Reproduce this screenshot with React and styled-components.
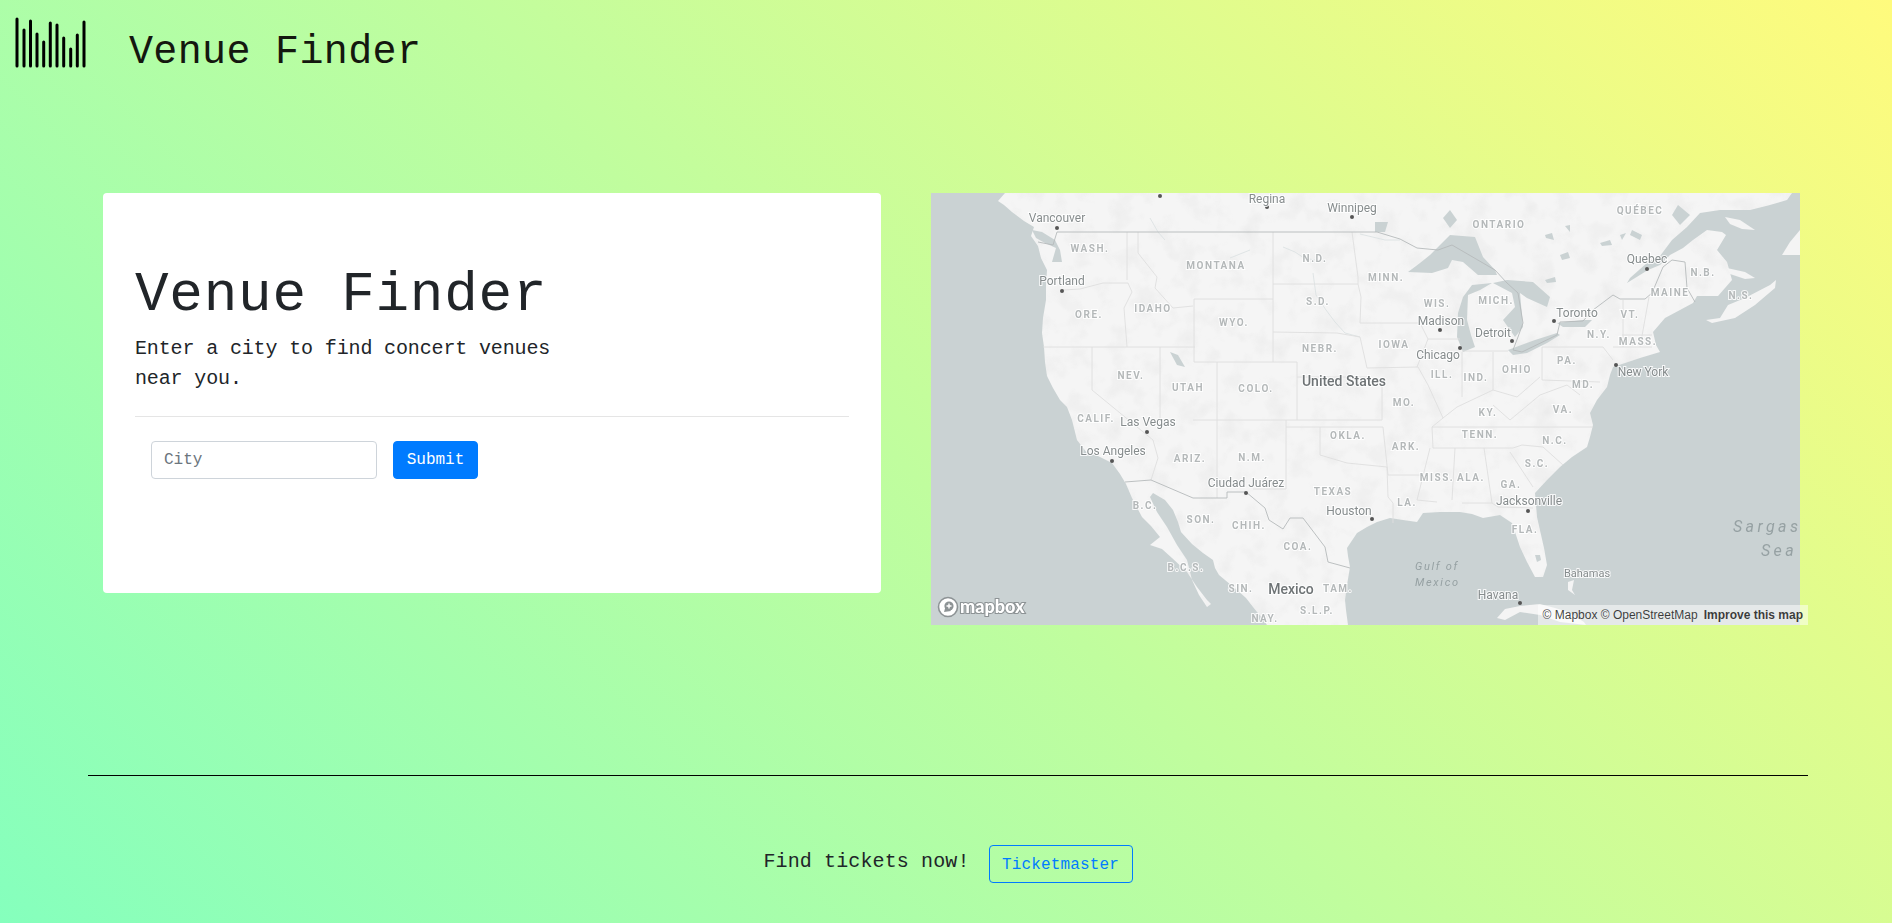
import React from 'react';
import styled, { createGlobalStyle } from 'styled-components';

const GlobalStyle = createGlobalStyle`
  html, body {
    margin: 0;
    padding: 0;
  }
  body {
    font-family: "Liberation Mono", "DejaVu Sans Mono", monospace;
    color: #212529;
  }
`;

const Page = styled.div`
  box-sizing: border-box;
  min-height: 100vh;
  overflow: hidden;
  background-color: #85ffbd;
  background-image: linear-gradient(45deg, #85ffbd 0%, #fffb7d 100%);
`;

const Header = styled.header`
  display: flex;
  align-items: flex-start;
  gap: 42px;
  height: 82px;
  padding: 16px 0 0 15px;
  box-sizing: border-box;
`;

const Brand = styled.h2`
  margin: 13px 0 0;
  font-size: 40px;
  line-height: 48px;
  font-weight: 400;
  letter-spacing: 0.35px;
  color: #14170f;
`;

const Main = styled.main`
  display: flex;
  align-items: flex-start;
  gap: 50px;
  margin: 111px 84px 0 103px;
`;

const Card = styled.section`
  box-sizing: border-box;
  width: 778px;
  height: 400px;
  padding: 64px 32px;
  background: #fff;
  border-radius: 4px;
`;

const Title = styled.h1`
  margin: 0 0 5px;
  padding-top: 5px;
  font-size: 56px;
  line-height: 67px;
  font-weight: 400;
  letter-spacing: 0.75px;
  color: #212529;
`;

const Lead = styled.p`
  margin: 0;
  max-width: 440px;
  font-size: 20px;
  line-height: 30px;
  letter-spacing: -0.14px;
  color: #212529;
`;

const Divider = styled.hr`
  margin: 22px 0 24px;
  border: 0;
  border-top: 1px solid rgba(0, 0, 0, 0.1);
`;

const SearchForm = styled.form`
  display: flex;
  gap: 16px;
  padding-left: 16px;
`;

const CityInput = styled.input`
  box-sizing: border-box;
  width: 226px;
  height: 38px;
  padding: 6px 12px;
  border: 1px solid #ced4da;
  border-radius: 4px;
  font-family: inherit;
  font-size: 16px;
  color: #495057;
  &::placeholder {
    color: #6c757d;
    opacity: 1;
  }
`;

const SubmitButton = styled.button`
  box-sizing: border-box;
  width: 85px;
  height: 38px;
  padding: 0;
  border: 1px solid #007bff;
  border-radius: 4px;
  background: #007bff;
  color: #fff;
  font-family: inherit;
  font-size: 16px;
`;

const MapWrap = styled.div`
  position: relative;
  width: 877px;
  height: 432px;
`;

const MapSvg = styled.svg`
  display: block;
  width: 869px;
  height: 432px;
  filter: blur(0.35px);
`;

const Attribution = styled.div`
  position: absolute;
  right: 0;
  bottom: 0;
  display: flex;
  gap: 6px;
  padding: 0 5px;
  background: rgba(255, 255, 255, 0.5);
  font: 12px/20px "Liberation Sans", Arial, sans-serif;
  color: rgba(0, 0, 0, 0.75);
`;

const AttributionLink = styled.span`
  font-weight: ${(p) => (p.$strong ? 700 : 400)};
`;

const PlaceLabel = styled.text`
  font-family: Roboto, "Liberation Sans", sans-serif;
  text-anchor: middle;
  dominant-baseline: middle;
  paint-order: stroke;
  stroke: rgba(255, 255, 255, 0.85);
  stroke-width: 2px;
  font-size: ${(p) => p.$size}px;
  font-weight: ${(p) => p.$weight};
  letter-spacing: ${(p) => p.$spacing}px;
  fill: ${(p) => p.$color};
`;

const SeaLabel = styled.text`
  font-family: Roboto, "Liberation Sans", sans-serif;
  font-style: italic;
  dominant-baseline: middle;
  font-size: ${(p) => p.$size}px;
  letter-spacing: ${(p) => p.$spacing}px;
  fill: #96a1a3;
`;

const LogoWord = styled.text`
  font-family: Lato, "Open Sans", sans-serif;
  font-weight: 900;
  font-size: 18px;
  fill: #fff;
  stroke: #8d9395;
  stroke-width: 2.2px;
  paint-order: stroke;
`;

const Footer = styled.footer`
  margin: 150px 84px 0 88px;
  border-top: 1px solid #000;
  padding-top: 69px;
  display: flex;
  justify-content: center;
  align-items: center;
  gap: 19px;
`;

const FooterText = styled.span`
  font-size: 20px;
  line-height: 30px;
  letter-spacing: 0.12px;
  padding-bottom: 4px;
  color: #212529;
`;

const TicketButton = styled.a`
  box-sizing: border-box;
  width: 144px;
  height: 38px;
  padding-top: 2px;
  display: flex;
  align-items: center;
  justify-content: center;
  border: 1px solid #007bff;
  border-radius: 4px;
  font-size: 16px;
  letter-spacing: 0.15px;
  color: #007bff;
`;

const BARS = [
  [17, 19], [24, 30], [30.5, 21], [37, 34], [43.7, 42], [50.3, 23],
  [57, 25], [63.7, 38], [70.7, 49], [77.3, 35], [84, 22],
];

const BarsLogo = () => (
  <svg width="72" height="52" viewBox="15 16 72 52" aria-hidden="true">
    {BARS.map(([x, top]) => (
      <line key={x} x1={x} x2={x} y1={top} y2={66} stroke="#000" strokeWidth="3" strokeLinecap="round" />
    ))}
  </svg>
);

const LAND = `M1005,193 L998,201 1004,205 1012,212 1024,221 1034,227 1031,236 1038,246 1041,258
  1047,270 1046,285 1046,300 1043,318 1042,333 1044,347 1045,362 1047,376 1053,388 1060,400 1067,407
  1072,420 1077,440 1087,453 1098,456 1112,463 1120,474 1126,484 1132,498 1142,517 1151,526 1160,537
  1150,545 1162,549 1172,558 1187,572 1197,587 1207,600 1211,604 1207,607 1199,595 1192,580 1187,560
  1177,545 1167,527 1157,512 1150,497 1153,493 1165,500 1173,510 1178,522 1181,532 1192,544 1203,553
  1213,560 1215,568 1219,575 1237,590 1246,598 1253,607 1262,618 1267,625 1348,625 1346,610 1345,600
  1347,585 1350,567 1348,556 1347,548 1357,533 1367,527 1377,522 1390,518 1403,520 1417,522 1423,513
  1440,512 1460,512 1472,514 1483,518 1500,515 1512,523 1516,535 1520,547 1527,562 1535,577 1543,577
  1547,565 1544,548 1537,517 1535,493 1547,480 1560,467 1572,457 1587,447 1590,437 1593,425 1590,413
  1597,400 1607,387 1610,375 1613,367 1640,358 1660,352 1656,345 1653,332 1665,318 1680,310 1693,303
  1697,296 1718,296 1732,280 1727,262 1717,250 1726,235 1722,232 1707,230 1693,240 1683,248 1670,255
  1660,265 1648,270 1627,283 1630,278 1648,262 1660,256 1672,240 1687,227 1700,213 1720,210 1750,210
  1770,205 1787,200 1792,193 Z`;

const NOVA_SCOTIA = '1706,320 1720,318 1728,305 1745,298 1770,285 1776,280 1775,288 1755,305 1735,318 1712,323';
const PEI = '1727,268 1745,272 1755,278 1745,279 1730,274';
const ANTICOSTI = '1725,217 1740,220 1755,230 1742,229 1730,224';
const CAPE = '1782,255 1790,242 1800,230 1800,255';
const CUBA = '1497,618 1505,609 1520,606 1540,604 1555,608 1568,612 1584,622 1586,625 1560,622 1540,615 1520,612 1505,620';
const ANDROS = '1568,582 1574,580 1572,590 1575,595 1568,590';
const FLORIDA_LAKE = '1535,555 1540,555 1541,560 1537,562';

const LAKES = [
  '1408,272 1420,263 1430,255 1440,245 1450,235 1475,237 1483,257 1495,270 1497,275 1478,275 1463,262 1452,260 1448,268 1432,273',
  '1472,285 1492,283 1480,290 1468,295 1467,320 1471,335 1475,347 1463,352 1457,337 1458,313 1463,297',
  '1493,283 1507,280 1533,282 1550,297 1547,307 1527,298 1520,293 1523,327 1515,337 1503,320 1515,307 1512,293',
  '1508,350 1535,340 1557,333 1560,335 1547,343 1527,353 1513,355',
  '1557,323 1583,320 1592,320 1585,327 1563,327',
  '1375,222 1388,222 1385,232 1375,232',
  '1443,218 1450,210 1457,220 1450,228',
  '1170,352 1178,355 1185,367 1177,365',
  '1600,243 1610,240 1612,245 1602,246',
  '1560,255 1568,252 1570,258 1562,260',
  '1545,280 1555,277 1556,282 1547,283',
  '1545,235 1552,233 1554,240 1546,238',
  '1632,230 1642,235 1640,240 1630,235',
  '1620,235 1626,233 1622,240',
  '1565,226 1570,225 1570,232',
  '1678,205 1690,215 1680,225 1672,215',
  '1032,230 1042,232 1055,240 1060,250 1062,262 1052,262 1056,248 1045,243 1036,238',
];

const STATE_LINES = [
  '1063,290 1080,289 1103,283 1128,283',
  '1127,232 1127,280',
  '1128,283 1132,292 1124,308 1127,347',
  '1043,347 1195,347',
  '1138,232 1138,253 1157,277 1155,288 1173,308 1193,306',
  '1194,299 1273,299 1273,362 1194,362 1194,299',
  '1273,232 1273,299',
  '1273,284 1358,284',
  '1352,232 1358,277 1358,284 1361,297 1360,323 1420,323',
  '1273,332 1337,333 1360,337 1367,368 1418,367',
  '1273,362 1297,362 1297,420',
  '1297,377 1370,377 1382,387 1382,420',
  '1193,420 1382,420',
  '1286,427 1383,427 1388,475 1420,475',
  '1286,420 1286,489 1253,489',
  '1320,427 1320,455 1347,463 1387,467 1388,497 1393,503 1393,523',
  '1160,347 1160,420',
  '1092,347 1092,390 1153,440 1158,458 1151,480',
  '1217,362 1217,498',
  '1420,323 1428,339 1417,367',
  '1428,339 1460,339',
  '1462,352 1462,397',
  '1462,351 1508,351',
  '1493,352 1493,390',
  '1542,347 1542,380',
  '1542,347 1603,347 1613,360',
  '1542,380 1600,382',
  '1418,367 1428,385 1443,418 1457,407 1493,390 1517,397 1540,377',
  '1432,427 1593,427',
  '1433,448 1513,448 1522,445 1543,447 1563,465',
  '1510,452 1533,487',
  '1455,448 1452,500',
  '1484,448 1492,503',
  '1430,448 1417,500 1437,502',
  '1462,503 1492,503 1498,507 1533,508',
  '1623,300 1623,347',
  '1649,297 1640,347',
  '1622,335 1652,335',
  '1613,347 1652,347',
  '1493,405 1510,420 1540,395 1567,385 1580,395',
  '1443,418 1432,427 1433,448',
];

const BORDER_LINES = [
  '1038,242 1053,245 1057,232 1377,232 1400,239 1417,248 1438,250 1452,245 1495,270 1507,283 1518,293 1523,323 1518,337 1513,350 1522,352 1557,335 1560,322 1583,321 1593,310 1613,295 1620,299 1645,299 1652,293 1663,267 1672,260 1685,262 1687,288 1695,302',
  '1125,482 1151,480 1193,498 1227,498 1227,492 1246,492 1265,508 1269,520 1283,529 1290,518 1303,518 1325,547 1328,562 1350,568',
];

const RIVERS = [
  '1283,247 1295,252 1304,258 1315,260',
  '1313,273 1316,295 1326,310 1335,322 1345,333 1360,337',
  '1150,218 1158,232 1165,240',
  '1230,258 1245,252 1250,250',
  '1360,234 1385,240 1400,240',
];

const STATES = [
  ['WASH.', 1090, 249], ['MONTANA', 1216, 266], ['N.D.', 1315, 259], ['MINN.', 1386, 278],
  ['ORE.', 1089, 315], ['IDAHO', 1153, 309], ['WYO.', 1234, 323], ['S.D.', 1318, 302],
  ['NEBR.', 1320, 349], ['IOWA', 1394, 345], ['NEV.', 1131, 376], ['UTAH', 1188, 388],
  ['COLO.', 1256, 389], ['MO.', 1404, 403], ['CALIF.', 1096, 419], ['OKLA.', 1348, 436],
  ['ARK.', 1406, 447], ['ARIZ.', 1190, 459], ['N.M.', 1252, 458], ['TEXAS', 1333, 492],
  ['LA.', 1407, 503], ['B.C.', 1145, 506], ['SON.', 1201, 520], ['CHIH.', 1249, 526],
  ['COA.', 1298, 547], ['B.C.S.', 1186, 568], ['SIN.', 1241, 589], ['TAM.', 1338, 589],
  ['S.L.P.', 1317, 611], ['NAY.', 1265, 619], ['ONTARIO', 1499, 225], ['QUÉBEC', 1640, 211],
  ['N.B.', 1703, 273], ['MAINE', 1670, 293], ['N.S.', 1741, 296], ['WIS.', 1437, 304],
  ['MICH.', 1496, 301], ['VT.', 1630, 315], ['N.Y.', 1599, 335], ['MASS.', 1638, 342],
  ['PA.', 1567, 361], ['ILL.', 1442, 375], ['IND.', 1476, 378], ['OHIO', 1517, 370],
  ['MD.', 1583, 385], ['KY.', 1488, 413], ['VA.', 1563, 410], ['TENN.', 1480, 435],
  ['N.C.', 1555, 441], ['S.C.', 1537, 464], ['MISS.', 1437, 478], ['ALA.', 1471, 478],
  ['GA.', 1511, 485], ['FLA.', 1525, 530],
];

const CITIES = [
  ['Vancouver', 1057, 219, 1057, 228], ['Regina', 1267, 200, 1267, 207], ['Winnipeg', 1352, 209, 1352, 217],
  ['Portland', 1062, 282, 1062, 291], ['Las Vegas', 1148, 423, 1147, 432], ['Los Angeles', 1113, 452, 1112, 461],
  ['Ciudad Juárez', 1246, 484, 1246, 493], ['Houston', 1349, 512, 1372, 519], ['Quebec', 1647, 260, 1647, 269],
  ['Madison', 1441, 322, 1440, 330], ['Toronto', 1577, 314, 1554, 321], ['Detroit', 1493, 334, 1512, 341],
  ['Chicago', 1438, 356, 1460, 348], ['New York', 1643, 373, 1616, 365], ['Jacksonville', 1529, 502, 1528, 511],
  ['Havana', 1498, 596, 1520, 603], ['Bahamas', 1587, 574],
];

// faint terrain mottling over the land, the tiles in the reference have it
const TERRAIN_MATRIX = '0 0 0 0 0.55  0 0 0 0 0.55  0 0 0 0 0.55  0 0 0 1.1 -0.52';

const MapDrawing = () => (
  <MapSvg viewBox="931 193 869 432" role="img" aria-label="Map of the United States">
    <defs>
      <clipPath id="land-clip">
        <path d={LAND} />
      </clipPath>
      <filter id="terrain" x="0" y="0" width="100%" height="100%">
        <feTurbulence type="fractalNoise" baseFrequency="0.045" numOctaves="3" seed="4" />
        <feColorMatrix values={TERRAIN_MATRIX} />
      </filter>
    </defs>
    <rect x="931" y="193" width="869" height="432" fill="#cad2d3" />
    <path d={LAND} fill="#f5f5f5" />
    <g clipPath="url(#land-clip)" opacity="0.35">
      <rect x="931" y="193" width="869" height="432" filter="url(#terrain)" />
    </g>
    {[NOVA_SCOTIA, PEI, ANTICOSTI, CAPE, CUBA, ANDROS].map((pts) => (
      <polygon key={pts} points={pts} fill="#f4f4f4" />
    ))}
    {[...LAKES, FLORIDA_LAKE].map((pts) => (
      <polygon key={pts} points={pts} fill="#cad2d3" />
    ))}
    {RIVERS.map((pts) => (
      <polyline key={pts} points={pts} fill="none" stroke="#dde2e3" strokeWidth="0.9" />
    ))}
    {STATE_LINES.map((pts) => (
      <polyline key={pts} points={pts} fill="none" stroke="#dfdfdf" strokeWidth="0.9" />
    ))}
    {BORDER_LINES.map((pts) => (
      <polyline key={pts} points={pts} fill="none" stroke="#b6babb" strokeWidth="0.9" />
    ))}
    <circle cx="1160" cy="196" r="2" fill="#555" />
    {CITIES.filter((c) => c[3]).map(([name, , , x, y]) => (
      <circle key={name} cx={x} cy={y} r="2" fill="#555" />
    ))}
    {STATES.map(([name, x, y]) => (
      <PlaceLabel key={name} x={x} y={y} $size={10} $weight={700} $spacing={1.5} $color="#b4b8b9">
        {name}
      </PlaceLabel>
    ))}
    {CITIES.map(([name, x, y]) => (
      <PlaceLabel key={name} x={x} y={y} $size={name === 'Bahamas' ? 11 : 12} $weight={400} $spacing={0} $color="#868c8d">
        {name}
      </PlaceLabel>
    ))}
    <PlaceLabel x={1344} y={382} $size={14} $weight={500} $spacing={0} $color="#6e7375">United States</PlaceLabel>
    <PlaceLabel x={1291} y={590} $size={14} $weight={500} $spacing={0} $color="#6e7375">Mexico</PlaceLabel>
    <SeaLabel x={1415} y={567} $size={11} $spacing={1.7}>Gulf of</SeaLabel>
    <SeaLabel x={1415} y={583} $size={11} $spacing={1.7}>Mexico</SeaLabel>
    <SeaLabel x={1733} y={528} $size={16} $spacing={3.4}>Sargasso</SeaLabel>
    <SeaLabel x={1761} y={552} $size={16} $spacing={3.4}>Sea</SeaLabel>
    <circle cx="948" cy="607" r="9.5" fill="#fff" stroke="#8d9395" strokeWidth="1.6" />
    <circle cx="949" cy="606" r="4.6" fill="#8d9395" />
    <path d="M944,612 L946,605 L951,611 Z" fill="#8d9395" />
    <path d="M949,603.5v5M946.5,606h5" stroke="#fff" strokeWidth="1.4" />
    <LogoWord x={960} y={613}>mapbox</LogoWord>
  </MapSvg>
);

const App = () => (
  <Page>
    <GlobalStyle />
    <Header>
      <BarsLogo />
      <Brand>Venue Finder</Brand>
    </Header>
    <Main>
      <Card>
        <Title>Venue Finder</Title>
        <Lead>Enter a city to find concert venues near you.</Lead>
        <Divider />
        <SearchForm onSubmit={(e) => e.preventDefault()}>
          <CityInput placeholder="City" />
          <SubmitButton type="submit">Submit</SubmitButton>
        </SearchForm>
      </Card>
      <MapWrap>
        <MapDrawing />
        <Attribution>
          <AttributionLink>© Mapbox © OpenStreetMap</AttributionLink>
          <AttributionLink $strong>Improve this map</AttributionLink>
        </Attribution>
      </MapWrap>
    </Main>
    <Footer>
      <FooterText>Find tickets now!</FooterText>
      <TicketButton>Ticketmaster</TicketButton>
    </Footer>
  </Page>
);

export default App;
